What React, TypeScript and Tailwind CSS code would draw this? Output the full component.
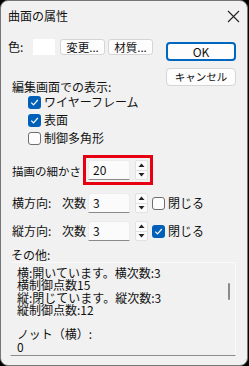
import React from "react";

const font = { fontFamily: '"Noto Sans CJK JP", "Noto Sans", sans-serif' };

function Check({ checked }: { checked: boolean }) {
  return checked ? (
    <div className="w-[13px] h-[13px] rounded-[3px] bg-[#005fb8] flex items-center justify-center">
      <svg width="9" height="9" viewBox="0 0 9 9">
        <path d="M1.3 4.6 L3.5 6.8 L7.8 2" fill="none" stroke="white" strokeWidth="1.2" />
      </svg>
    </div>
  ) : (
    <div className="w-[13px] h-[13px] rounded-[3px] bg-[#fdfdfd] border border-[#6e6e6e]" />
  );
}

function Spin() {
  return (
    <div className="w-[13px] h-[20px] flex flex-col bg-[#fbfbfb] border border-[#e2e2e2] rounded-[2px]">
      <div className="flex-1 flex items-center justify-center border-b border-[#e2e2e2]">
        <svg width="7" height="4" viewBox="0 0 7 4"><path d="M0.5 4 L3.5 0.5 L6.5 4 Z" fill="#222" /></svg>
      </div>
      <div className="flex-1 flex items-center justify-center">
        <svg width="7" height="4" viewBox="0 0 7 4"><path d="M0.5 0 L3.5 3.5 L6.5 0 Z" fill="#222" /></svg>
      </div>
    </div>
  );
}

function Input({ value }: { value: string }) {
  return (
    <div className="w-[42px] h-[20px] bg-[#fbfbfb] border border-[#ececec] border-b-[#8a8a8a] rounded-t-[3px] flex items-center pl-[4px] text-[12px] leading-[12px] text-[#111]">
      {value}
    </div>
  );
}

function Btn({ children, w }: { children: React.ReactNode; w: string }) {
  return (
    <div className={`${w} h-[16px] bg-[#fdfdfd] border border-[#d5d5d5] rounded-[3px] flex items-center justify-center text-[11.5px] leading-[12px] text-[#111]`}>
      {children}
    </div>
  );
}

export default function App() {
  return (
    <div className="w-[249px] h-[366px] bg-black" style={font}>
      <div className="w-[248px] h-[366px] rounded-[8px] bg-[#f1f1f1] border border-[#767676] flex flex-col text-[#111] overflow-hidden">
        {/* title bar */}
        <div className="h-[27px] flex items-center justify-between pl-[7px] pr-[7px]">
          <span className="text-[12px] leading-[12px] mt-[2px]">曲面の属性</span>
          <svg width="13" height="13" viewBox="0 0 13 13" className="mt-[3px]">
            <path d="M1 1 L12 12 M12 1 L1 12" stroke="#222" strokeWidth="1.1" />
          </svg>
        </div>

        {/* top section */}
        <div className="flex">
          <div className="flex-1 flex flex-col">
            <div className="mt-[11px] h-[16px] flex items-center pl-[7px]">
              <span className="w-[25px] text-[12px] leading-[12px]">色:</span>
              <div className="w-[22px] h-[16px] bg-white" />
              <div className="ml-[5px]"><Btn w="w-[45px]">変更...</Btn></div>
              <div className="ml-[3px]"><Btn w="w-[45px]">材質...</Btn></div>
            </div>
            <div className="mt-[26px] h-[12px] pl-[11px] text-[12px] leading-[12px]">編集画面での表示:</div>
            {[
              ["ワイヤーフレーム", true],
              ["表面", true],
              ["制御多角形", false],
            ].map(([t, c]) => (
              <div key={t as string} className="h-[18px] flex items-center pl-[27px] gap-[3px]">
                <Check checked={c as boolean} />
                <span className="text-[12px] leading-[12px]">{t as string}</span>
              </div>
            ))}
          </div>
          <div className="w-[82px] flex flex-col pt-[14px] pl-[1px]">
            <div className="w-[70px] h-[19px] bg-[#fdfdfd] border-2 border-[#0067c0] rounded-[4px] flex items-center justify-center text-[12px] leading-[12px]">
              OK
            </div>
            <div className="mt-[7px] w-[70px] h-[18px] bg-[#fdfdfd] border border-[#d5d5d5] rounded-[4px] flex items-center justify-center text-[10.5px] leading-[12px]">
              キャンセル
            </div>
          </div>
        </div>

        {/* 描画の細かさ */}
        <div className="mt-[8px] flex items-center pl-[11px]">
          <span className="w-[71px] whitespace-nowrap text-[11.5px] leading-[12px] mt-[2px]">描画の細かさ</span>
          <div className="w-[70px] h-[30px] border-[3px] border-[#e60012] flex items-center pl-[2px] gap-[5px]">
            <Input value="20" />
            <Spin />
          </div>
        </div>

        {/* 横方向 / 縦方向 */}
        {[
          ["横方向:", false],
          ["縦方向:", true],
        ].map(([t, c], i) => (
          <div key={i} className="mt-[8px] h-[20px] flex items-center pl-[11px]">
            <span className="w-[50px] text-[12px] leading-[12px]">{t as string}</span>
            <span className="w-[26px] text-[12px] leading-[12px]">次数</span>
            <Input value="3" />
            <div className="ml-[5px]"><Spin /></div>
            <div className="ml-[4px]"><Check checked={c as boolean} /></div>
            <span className="ml-[3px] text-[12px] leading-[12px]">閉じる</span>
          </div>
        ))}

        <div className="mt-[8px] h-[12px] pl-[10px] text-[12px] leading-[12px]">その他:</div>

        <div className="mt-[1px] ml-[9px] w-[226px] h-[94px] border border-t-[#fafafa] border-r-[#fafafa] border-l-transparent border-b-[#8c8c8c] flex">
          <div className="flex-1 pl-[6px] pt-[4px] text-[12px] leading-[12.3px] whitespace-pre">
            {"横:開いています。横次数:3\n横制御点数15\n縦:閉じています。縦次数:3\n縦制御点数:12\n\nノット（横）:\n0"}
          </div>
          <div className="w-[12px] pt-[20px] flex justify-center">
            <div className="w-[2px] h-[17px] bg-[#8a8a8a] rounded-full" />
          </div>
        </div>
      </div>
    </div>
  );
}
